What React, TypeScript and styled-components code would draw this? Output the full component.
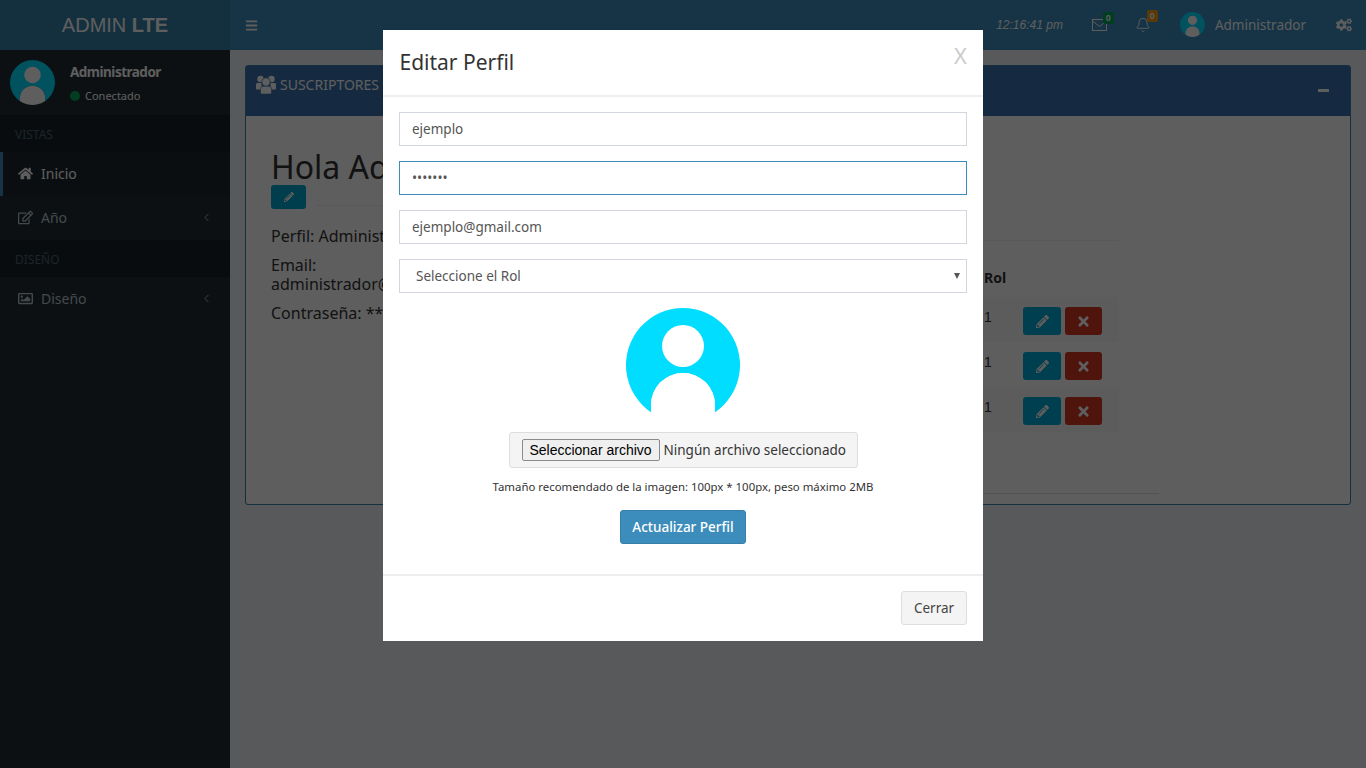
import styled, { createGlobalStyle } from "styled-components";
import { Bell, ChevronLeft } from "lucide-react";
import {
  FaBars,
  FaCogs,
  FaHome,
  FaPencilAlt,
  FaRegEdit,
  FaRegImage,
  FaTimes,
} from "react-icons/fa";

const FONT = `"Noto Sans", "Open Sans", sans-serif`;
const ARIAL = `"Liberation Sans", Arial, sans-serif`;

const GlobalStyle = createGlobalStyle`
  html, body {
    margin: 0;
    height: 100%;
    overflow: hidden;
    background: #ecf0f5;
    font-family: ${FONT};
    font-size: 14px;
    color: #333;
  }

  * {
    box-sizing: border-box;
  }
`;

const Page = styled.div`
  display: grid;
  grid-template-columns: 230px 1fr;
  grid-template-rows: 50px 1fr;
  height: 768px;
`;

const Logo = styled.div`
  display: flex;
  align-items: center;
  justify-content: center;
  background: #367fa9;
  color: #fff;
  font-family: ${ARIAL};
  font-size: 20px;
  white-space: pre;

  b {
    font-weight: 700;
  }
`;

const Navbar = styled.header`
  display: flex;
  align-items: center;
  background: #3c8dbc;
  color: #fff;
  padding: 0 14px 0 15px;
`;

const Toggle = styled.span`
  display: flex;
  font-size: 13px;
  margin-right: auto;
`;

const Clock = styled.span`
  font-family: ${ARIAL};
  font-size: 12px;
  font-style: italic;
  margin-right: 29px;
`;

const NavIcon = styled.span<{ $gap: number }>`
  position: relative;
  display: flex;
  margin-right: ${({ $gap }) => $gap}px;
`;

const NavBadge = styled.span<{ $color: string }>`
  position: absolute;
  top: -7px;
  right: -7px;
  width: 11px;
  height: 12px;
  border-radius: 2px;
  background: ${({ $color }) => $color};
  color: #fff;
  font-family: ${ARIAL};
  font-size: 9px;
  font-weight: 700;
  line-height: 12px;
  text-align: center;
`;

const NavUser = styled.span`
  display: flex;
  align-items: center;
  gap: 10px;
  margin-right: 30px;
  font-size: 13.5px;
  padding-bottom: 1px;
`;

const Avatar = styled.svg<{ $size: number }>`
  display: block;
  flex: none;
  width: ${({ $size }) => $size}px;
  height: ${({ $size }) => $size}px;
`;

const Sidebar = styled.aside`
  background: #222d32;
  color: #b8c7ce;
`;

const UserPanel = styled.div`
  display: flex;
  gap: 15px;
  height: 65px;
  padding: 10px;
`;

const UserName = styled.div`
  color: #fff;
  font-size: 13.5px;
  font-weight: 700;
  letter-spacing: -0.5px;
  line-height: 20px;
  margin-top: 2px;
`;

const UserStatus = styled.div`
  display: flex;
  align-items: center;
  gap: 5px;
  color: #fff;
  font-size: 11px;
  margin-top: 6px;
`;

const StatusDot = styled.i`
  width: 10px;
  height: 10px;
  border-radius: 50%;
  background: #00a65a;
`;

const MenuHeader = styled.div`
  height: 37px;
  padding: 11px 15px 0;
  background: #1a2226;
  color: #4b646f;
  font-size: 12px;
`;

const MenuItem = styled.div<{ $active?: boolean }>`
  display: flex;
  align-items: center;
  height: 44px;
  padding-left: ${({ $active }) => ($active ? 15 : 18)}px;
  padding-right: 17px;
  padding-bottom: 1px;
  gap: 8px;
  border-left: ${({ $active }) => ($active ? "3px solid #3c8dbc" : "0")};
  background: ${({ $active }) => ($active ? "#1e282c" : "transparent")};
  color: ${({ $active }) => ($active ? "#fff" : "#b8c7ce")};

  svg:first-child {
    font-size: 15px;
  }

  svg:last-child:not(:first-child) {
    margin-left: auto;
  }
`;

const Content = styled.main`
  padding: 15px;
`;

const Box = styled.section`
  height: 440px;
  border: 1px solid #367fa9;
  border-radius: 3px;
  background: #fff;
`;

const BoxHeader = styled.div`
  display: flex;
  align-items: flex-start;
  justify-content: space-between;
  height: 50px;
  padding: 8px 21px 0 10px;
  background: #3a72ad;
  color: #fff;
`;

const BoxTitle = styled.span`
  display: flex;
  align-items: center;
  gap: 4px;
  font-size: 14px;
  height: 20px;
`;

const UsersIcon = styled.svg`
  display: block;
  width: 20px;
  height: 19px;
`;

const Minimize = styled.i`
  width: 11px;
  height: 3px;
  margin-top: 15px;
  background: #fff;
`;

const BoxBody = styled.div`
  display: grid;
  grid-template-columns: 340px 1fr;
  padding: 0 25px;
`;

const Profile = styled.div`
  font-size: 16px;
  padding-top: 33px;
`;

const Greeting = styled.h1`
  margin: 0;
  font-size: 32px;
  font-weight: 400;
  line-height: 36px;
  white-space: nowrap;
`;

const ProfileEditRow = styled.div`
  display: flex;
  align-items: flex-start;
  gap: 10px;
  margin-bottom: 18px;
`;

const EditSmall = styled.span`
  display: flex;
  align-items: center;
  justify-content: center;
  width: 35px;
  height: 24px;
  border-radius: 3px;
  background: #00a7d0;
  color: #fff;
  font-size: 10px;
`;

const Rule = styled.hr`
  margin: 0;
  border: 0;
  border-top: 1px solid #eee;
`;

const ProfileRule = styled(Rule)`
  flex: 1;
  margin-top: 20px;
`;

const ProfileLine = styled.p`
  margin: 0 0 10px;
  line-height: 19px;
  white-space: nowrap;
`;

const Subscribers = styled.div`
  padding-top: 124px;
`;

const SubscriberRule = styled(Rule)`
  width: 508px;
`;

const BottomRule = styled(Rule)`
  width: 548px;
  margin-top: 61px;
  border-top-color: #ddd;
`;

const Table = styled.table`
  width: 508px;
  margin-top: 18px;
  border-collapse: collapse;
  table-layout: fixed;
  font-family: ${ARIAL};
  font-size: 14px;
`;

const HeadCell = styled.th<{ $width: number }>`
  width: ${({ $width }) => $width}px;
  height: 38px;
  padding: 0 0 2px 8px;
  font-family: ${FONT};
  font-weight: 700;
  text-align: left;
`;

const Row = styled.tr<{ $striped: boolean }>`
  height: 45px;
  background: ${({ $striped }) => ($striped ? "#f9f9f9" : "transparent")};
`;

const Cell = styled.td`
  padding: 0 0 0 8px;
  vertical-align: top;
  line-height: 41px;
`;

const ActionsCell = styled.td`
  padding: 0 0 0 8px;
  vertical-align: top;
`;

const Actions = styled.div`
  display: flex;
  gap: 4px;
  padding-top: 10px;
`;

const ActionButton = styled.span<{ $color: string; $width: number }>`
  display: flex;
  align-items: center;
  justify-content: center;
  width: ${({ $width }) => $width}px;
  height: 28px;
  border-radius: 3px;
  background: ${({ $color }) => $color};
  color: #fff;
`;

const Backdrop = styled.div`
  position: fixed;
  inset: 0;
  display: flex;
  justify-content: center;
  padding-top: 30px;
  background: rgba(0, 0, 0, 0.63);
`;

const Modal = styled.div`
  width: 600px;
  height: 611px;
  background: #fff;
`;

const ModalHeader = styled.div`
  display: flex;
  justify-content: space-between;
  height: 67px;
  padding: 17px 16px 0 16.5px;
  border-bottom: 2px solid #eee;
`;

const ModalTitle = styled.h4`
  margin: 0;
  font-size: 21px;
  font-weight: 400;
  line-height: 31px;
`;

const CloseMark = styled.span`
  margin-top: -4px;
  color: #ccc;
  font-family: ${FONT};
  font-size: 22px;
  line-height: 24px;
`;

const ModalBody = styled.div`
  display: flex;
  flex-direction: column;
  height: 479px;
  padding: 15px 16px 0;
  border-bottom: 2px solid #eee;
`;

const Input = styled.input<{ $focus?: boolean }>`
  display: block;
  flex: none;
  width: 100%;
  height: 34px;
  margin-bottom: 15px;
  padding: 0 12px 1px;
  border: 1px solid ${({ $focus }) => ($focus ? "#3c8dbc" : "#d2d6de")};
  outline: none;
  color: #555;
  font-family: ${FONT};
  font-size: 13.5px;
`;

const SelectWrap = styled.div`
  position: relative;
  flex: none;
`;

const Select = styled.select`
  display: block;
  width: 100%;
  height: 34px;
  padding: 0 16px 1px;
  border: 1px solid #d2d6de;
  border-radius: 0;
  background: #fff;
  color: #555;
  font-family: ${FONT};
  font-size: 13.5px;
  appearance: none;
`;

const SelectArrow = styled.i`
  position: absolute;
  top: 14px;
  right: 7px;
  width: 0;
  height: 0;
  border-left: 3px solid transparent;
  border-right: 3px solid transparent;
  border-top: 6px solid #555;
  pointer-events: none;
`;

const PhotoWrap = styled.div`
  display: flex;
  justify-content: center;
  margin-top: 15px;
`;

const FileBox = styled.div`
  display: flex;
  align-items: center;
  align-self: center;
  gap: 4px;
  width: 349px;
  height: 36px;
  margin-top: 10px;
  padding: 0 12px;
  border: 1px solid #ddd;
  border-radius: 3px;
  background: #f4f4f4;
  font-size: 13.5px;
  white-space: nowrap;
`;

const FileButton = styled.button`
  flex: none;
  width: 138px;
  height: 22px;
  padding: 0;
  border: 1px solid #8a8a8a;
  border-radius: 2px;
  background: #efefef;
  color: #000;
  font-family: ${ARIAL};
  font-size: 14px;
  white-space: nowrap;
`;

const Hint = styled.p`
  margin: 11px 0 0;
  font-size: 11.4px;
  line-height: 16px;
  text-align: center;
  white-space: nowrap;
`;

const SubmitButton = styled.button`
  align-self: center;
  width: 126px;
  height: 34px;
  margin-top: 15px;
  padding: 0 0 1px;
  border: 1px solid #367fa9;
  border-radius: 3px;
  background: #3c8dbc;
  color: #fff;
  font-family: ${FONT};
  font-size: 13.5px;
  font-weight: 500;
`;

const ModalFooter = styled.div`
  display: flex;
  justify-content: flex-end;
  padding: 15px 16px;
`;

const CloseButton = styled.button`
  width: 66px;
  height: 34px;
  padding: 0 0 1px;
  border: 1px solid #ddd;
  border-radius: 3px;
  background: #f4f4f4;
  color: #444;
  font-family: ${FONT};
  font-size: 13.5px;
`;

function UserPhoto({ size }: { size: number }) {
  return (
    <Avatar $size={size} viewBox="0 0 114 114">
      <clipPath id={`photo-${size}`}>
        <circle cx="57" cy="57" r="57" />
      </clipPath>
      <path d="M25 104.200A57 57 0 1 1 89 104.200V97A32 32 0 0 0 25 97Z" fill="#00ddff" />
      <circle cx="57" cy="38" r="21" fill="#fff" />
      <path
        d="M25 97a32 32 0 0 1 64 0V114H25Z"
        fill="#fff"
        clipPath={`url(#photo-${size})`}
      />
    </Avatar>
  );
}

function UsersGlyph() {
  return (
    <UsersIcon viewBox="0 0 20 19" fill="currentColor">
      <circle cx="4.5" cy="4" r="3.2" />
      <circle cx="15.5" cy="4" r="3.2" />
      <path d="M0 9.5C0 8.3 1 8 2 8h3.5v6.5H1C.4 14.500 0 14 0 13.500ZM14.500 8H18c1 0 2 .3 2 1.500v4c0 .5-.4 1-1 1h-4.500Z" />
      <circle cx="10" cy="7" r="4.200" stroke="#3a72ad" strokeWidth="0.8" />
      <path
        d="M4.500 14c0-1.800 1-2.800 2.500-2.800h6c1.500 0 2.500 1 2.500 2.800v3.500c0 1-.8 1.500-1.500 1.500H6c-.7 0-1.500-.5-1.500-1.500Z"
        stroke="#3a72ad"
        strokeWidth="0.6"
      />
    </UsersIcon>
  );
}

function EnvelopeGlyph() {
  return (
    <svg width="15" height="12" viewBox="0 0 15 12" fill="none" stroke="currentColor">
      <rect x="0.5" y="0.5" width="14" height="11" />
      <path d="M0.500 2l7 5.500 7-5.500" />
    </svg>
  );
}

const SUBSCRIBERS = [1, 2, 3];

export default function App() {
  return (
    <>
      <GlobalStyle />
      <Page>
        <Logo>
          ADMIN <b>LTE</b>
        </Logo>
        <Navbar>
          <Toggle>
            <FaBars />
          </Toggle>
          <Clock>12:16:41 pm</Clock>
          <NavIcon $gap={28}>
            <EnvelopeGlyph />
            <NavBadge $color="#00a65a">0</NavBadge>
          </NavIcon>
          <NavIcon $gap={29}>
            <Bell size={16} strokeWidth={1.4} />
            <NavBadge $color="#f39c12">0</NavBadge>
          </NavIcon>
          <NavUser>
            <UserPhoto size={25} />
            Administrador
          </NavUser>
          <FaCogs size={16} />
        </Navbar>
        <Sidebar>
          <UserPanel>
            <UserPhoto size={45} />
            <div>
              <UserName>Administrador</UserName>
              <UserStatus>
                <StatusDot />
                Conectado
              </UserStatus>
            </div>
          </UserPanel>
          <MenuHeader>VISTAS</MenuHeader>
          <MenuItem $active>
            <FaHome />
            Inicio
          </MenuItem>
          <MenuItem>
            <FaRegEdit />
            Año
            <ChevronLeft size={13} strokeWidth={1.6} />
          </MenuItem>
          <MenuHeader>DISEÑO</MenuHeader>
          <MenuItem>
            <FaRegImage />
            Diseño
            <ChevronLeft size={13} strokeWidth={1.6} />
          </MenuItem>
        </Sidebar>
        <Content>
          <Box>
            <BoxHeader>
              <BoxTitle>
                <UsersGlyph />
                SUSCRIPTORES
              </BoxTitle>
              <Minimize />
            </BoxHeader>
            <BoxBody>
              <Profile>
                <Greeting>Hola Administrador</Greeting>
                <ProfileEditRow>
                  <EditSmall>
                    <FaPencilAlt />
                  </EditSmall>
                  <ProfileRule />
                </ProfileEditRow>
                <ProfileLine>Perfil: Administrador</ProfileLine>
                <ProfileLine>
                  Email:
                  <br />
                  administrador@gmail.com
                </ProfileLine>
                <ProfileLine>Contraseña: *******</ProfileLine>
              </Profile>
              <Subscribers>
                <SubscriberRule />
                <Table>
                  <thead>
                    <tr>
                      <HeadCell $width={365}>Usuario</HeadCell>
                      <HeadCell $width={39}>Rol</HeadCell>
                      <HeadCell $width={104} />
                    </tr>
                  </thead>
                  <tbody>
                    {SUBSCRIBERS.map((id) => (
                      <Row key={id} $striped={id % 2 === 1}>
                        <Cell>ejemplo</Cell>
                        <Cell>1</Cell>
                        <ActionsCell>
                          <Actions>
                            <ActionButton $color="#00acd6" $width={38}>
                              <FaPencilAlt size={13} />
                            </ActionButton>
                            <ActionButton $color="#d73925" $width={37}>
                              <FaTimes size={15} />
                            </ActionButton>
                          </Actions>
                        </ActionsCell>
                      </Row>
                    ))}
                  </tbody>
                </Table>
                <BottomRule />
              </Subscribers>
            </BoxBody>
          </Box>
        </Content>
      </Page>
      <Backdrop>
        <Modal>
          <ModalHeader>
            <ModalTitle>Editar Perfil</ModalTitle>
            <CloseMark>X</CloseMark>
          </ModalHeader>
          <ModalBody>
            <Input type="text" defaultValue="ejemplo" readOnly />
            <Input type="password" defaultValue="ejemplo" readOnly $focus />
            <Input type="text" defaultValue="ejemplo@gmail.com" readOnly />
            <SelectWrap>
              <Select defaultValue="">
                <option value="">Seleccione el Rol</option>
              </Select>
              <SelectArrow />
            </SelectWrap>
            <PhotoWrap>
              <UserPhoto size={114} />
            </PhotoWrap>
            <FileBox>
              <FileButton type="button">Seleccionar archivo</FileButton>
              Ningún archivo seleccionado
            </FileBox>
            <Hint>Tamaño recomendado de la imagen: 100px * 100px, peso máximo 2MB</Hint>
            <SubmitButton type="button">Actualizar Perfil</SubmitButton>
          </ModalBody>
          <ModalFooter>
            <CloseButton type="button">Cerrar</CloseButton>
          </ModalFooter>
        </Modal>
      </Backdrop>
    </>
  );
}
